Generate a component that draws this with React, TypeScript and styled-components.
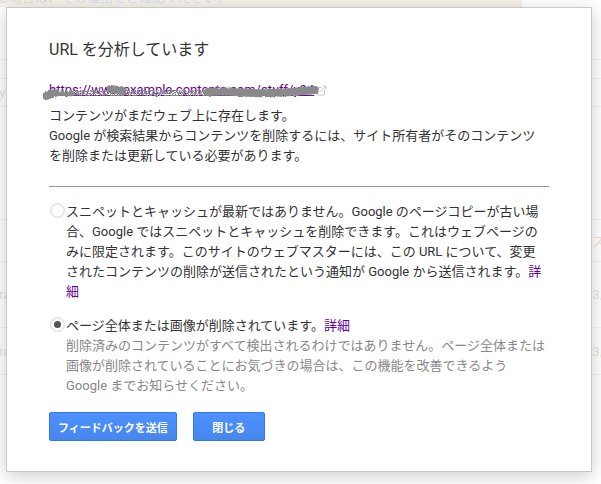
import React from "react";
import styled, { createGlobalStyle } from "styled-components";

const GlobalStyle = createGlobalStyle`
  html, body {
    margin: 0;
    padding: 0;
    background: #fff;
  }
  body {
    font-family: Roboto, "Noto Sans CJK JP", "Liberation Sans", sans-serif;
    font-size: 13px;
    color: #333;
  }
`;

const Page = styled.div`
  position: relative;
  width: 601px;
  height: 484px;
  overflow: hidden;
  box-sizing: border-box;
  padding: 7px 9px 12px 6px;
  background: #fff;
`;

/* the dimmed results page that shows round the dialog */
const Backdrop = styled.div`
  position: absolute;
  inset: 0;
  display: flex;
  flex-direction: column;
  font-size: 13px;
`;

const Notice = styled.div`
  flex: none;
  display: flex;
  align-items: flex-end;
  width: 522px;
  height: 7px;
  overflow: hidden;
  background: #f6f2ea;
  color: #dedbd4;
  line-height: 20px;
  white-space: nowrap;
`;

const NoticeText = styled.span`
  flex: none;
  margin-left: -4px;
  margin-bottom: -1px;
`;

const NoticeLink = styled.span`
  color: #d8def2;
`;

const BackRow = styled.div<{ $height: number }>`
  flex: none;
  display: flex;
  align-items: center;
  justify-content: space-between;
  box-sizing: border-box;
  height: ${(p) => p.$height}px;
  border-bottom: 1px solid #f3f3f3;
`;

const BackText = styled.span<{ $color: string }>`
  margin: 0 -4px 0 -1px;
  color: ${(p) => p.$color};
`;

const Dialog = styled.div`
  position: relative;
  box-sizing: border-box;
  height: 465px;
  padding: 32px 42px 0;
  background: #fff;
  border: 1px solid #c8c8c8;
  box-shadow: 0 4px 16px rgba(0, 0, 0, 0.2);
`;

const Title = styled.h2`
  margin: 0 0 20px;
  font-size: 16px;
  font-weight: 400;
  line-height: 20px;
  color: #333;
`;

const UrlRow = styled.div`
  position: relative;
  display: flex;
  align-items: center;
  gap: 2px;
  height: 20px;
  margin-bottom: 6px;
`;

const UrlLink = styled.a`
  color: #609;
  font-size: 13px;
  line-height: 20px;
  text-decoration: underline;
  white-space: nowrap;
`;

const Scribble = styled.svg`
  position: absolute;
  left: -6px;
  top: 0;
`;

const ExternalIcon = styled.svg`
  flex: none;
`;

const Intro = styled.p`
  width: 498px;
  margin: 0;
  line-height: 20px;
  color: #333;
`;

const Rule = styled.hr`
  height: 1px;
  margin: 20px 0 15px;
  border: 0;
  background: #999;
`;

const Option = styled.div`
  display: flex;
  align-items: flex-start;
  margin-bottom: 14px;
`;

const Radio = styled.span<{ $checked?: boolean }>`
  flex: none;
  display: flex;
  align-items: center;
  justify-content: center;
  box-sizing: border-box;
  width: 15px;
  height: 15px;
  margin: 1px 1px 0 1px;
  border: 1px solid #dcdcdc;
  border-radius: 50%;
  background: #fff;
  box-shadow: inset 0 0 0 1px #f0f0f0;

  &::after {
    content: "";
    display: ${(p) => (p.$checked ? "block" : "none")};
    width: 7px;
    height: 7px;
    border-radius: 50%;
    background: #555;
  }
`;

const OptionBody = styled.div`
  width: 480px;
  line-height: 20px;
  color: #333;
`;

const Hint = styled.div`
  color: #888;
`;

const DetailLink = styled.a`
  color: #609;
  text-decoration: none;
`;

const Actions = styled.div`
  display: flex;
  gap: 16px;
  margin-top: 16px;
`;

const Button = styled.button`
  box-sizing: border-box;
  height: 29px;
  padding: 0 8px;
  border: 1px solid #3079ed;
  border-radius: 2px;
  background: linear-gradient(#4d90fe, #4787ed);
  color: #fff;
  font-family: inherit;
  font-size: 11px;
  font-weight: 700;
`;

const CloseButton = styled(Button)`
  width: 72px;
`;

export default function App() {
  return (
    <Page lang="ja">
      <GlobalStyle />
      <Backdrop>
        <Notice>
          <NoticeText>
            る場合は、<NoticeLink>その理由をご確認ください。</NoticeLink>
          </NoticeText>
        </Notice>
        <BackRow $height={53} />
        <BackRow $height={19} />
        <BackRow $height={28}>
          <BackText $color="#e6e6e6">y</BackText>
        </BackRow>
        <BackRow $height={113} />
        <BackRow $height={42}>
          <span />
          <BackText $color="#f8dcdc">ス</BackText>
        </BackRow>
        <BackRow $height={66}>
          <BackText $color="#e2def0">ra</BackText>
          <BackText $color="#e6e6e6">3/</BackText>
        </BackRow>
        <BackRow $height={47}>
          <BackText $color="#e2def0">ra</BackText>
          <BackText $color="#e6e6e6">3/</BackText>
        </BackRow>
      </Backdrop>
      <Dialog>
        <Title>URL を分析しています</Title>
        <UrlRow>
          <UrlLink>https://www.example-contents.com/stuff/y24</UrlLink>
          <ExternalIcon width="11" height="11" viewBox="0 0 11 11">
            <path
              d="M8.5 5.5V10H1V2.5h4.5M6.5 1H10v3.5M10 1 4.5 6.5"
              fill="none"
              stroke="#c4c4c4"
              strokeWidth="1"
            />
          </ExternalIcon>
          <Scribble width="284" height="24" viewBox="0 0 284 24">
            <defs>
              <filter id="rough" x="-5%" y="-50%" width="110%" height="200%">
                <feTurbulence type="fractalNoise" baseFrequency="0.45" numOctaves="2" seed="4" />
                <feDisplacementMap in="SourceGraphic" scale="3" />
              </filter>
              <filter id="speckle" x="-5%" y="-50%" width="110%" height="200%">
                <feTurbulence type="fractalNoise" baseFrequency="0.9" numOctaves="1" seed="9" result="noise" />
                <feColorMatrix
                  in="noise"
                  values="0 0 0 0 0  0 0 0 0 0  0 0 0 0 0  0 0 0 9 -3.8"
                  result="dots"
                />
                <feComposite in="SourceGraphic" in2="dots" operator="in" />
              </filter>
            </defs>
            <g fill="none" stroke="#8a8a8a" strokeLinecap="round" filter="url(#rough)">
              <path d="M3 16 L12 13" strokeWidth="8" />
              <path d="M12 14 C18 13 24 15 30 14" strokeWidth="4" />
              <path d="M68 9 L80 11" strokeWidth="8" />
              <path d="M165 12 C190 10 200 14 225 13 S255 12 272 10" strokeWidth="8" />
            </g>
            <path
              d="M6 14 C40 15 60 12 90 12 S140 14 175 12"
              fill="none"
              stroke="#8a8a8a"
              strokeWidth="14"
              filter="url(#speckle)"
            />
          </Scribble>
        </UrlRow>
        <Intro>
          コンテンツがまだウェブ上に存在します。
          <br />
          Google が検索結果からコンテンツを削除するには、サイト所有者がそのコンテンツを削除または更新している必要があります。
        </Intro>
        <Rule />
        <Option>
          <Radio />
          <OptionBody>
            スニペットとキャッシュが最新ではありません。Google のページコピーが古い場合、Google ではスニペットとキャッシュを削除できます。これはウェブページのみに限定されます。このサイトのウェブマスターには、この URL について、変更されたコンテンツの削除が送信されたという通知が Google から送信されます。
            <DetailLink>詳細</DetailLink>
          </OptionBody>
        </Option>
        <Option>
          <Radio $checked />
          <OptionBody>
            ページ全体または画像が削除されています。<DetailLink>詳細</DetailLink>
            <Hint>
              削除済みのコンテンツがすべて検出されるわけではありません。ページ全体または画像が削除されていることにお気づきの場合は、この機能を改善できるよう Google までお知らせください。
            </Hint>
          </OptionBody>
        </Option>
        <Actions>
          <Button>フィードバックを送信</Button>
          <CloseButton>閉じる</CloseButton>
        </Actions>
      </Dialog>
    </Page>
  );
}
